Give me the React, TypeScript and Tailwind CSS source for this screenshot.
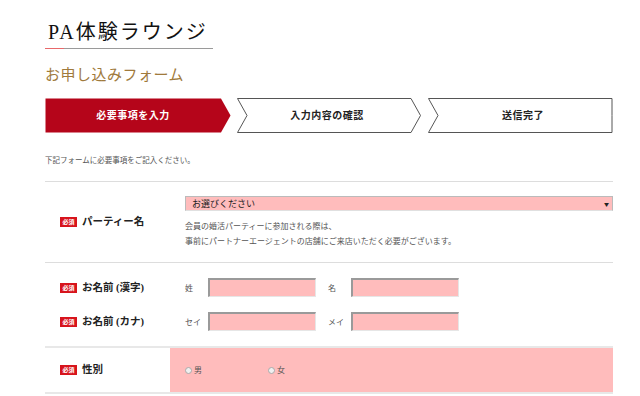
import React from "react";

const serif = { fontFamily: '"Liberation Serif","Noto Sans CJK JP",serif' };
const sans = { fontFamily: '"Noto Sans CJK JP","Liberation Sans",sans-serif' };

function Badge() {
  return (
    <span
      className="inline-flex h-[10px] w-[17px] items-center justify-center bg-[#d7141c] text-[6px] font-bold leading-none text-white"
      style={serif}
    >
      必須
    </span>
  );
}

function Label({ text }: { text: string }) {
  return (
    <div className="flex w-[125px] shrink-0 items-center gap-[5px] pl-[15px]">
      <Badge />
      <span className="text-[10.5px] font-bold text-[#222]" style={serif}>
        {text}
      </span>
    </div>
  );
}

function Step({
  text,
  width,
  active,
  notch,
  point,
}: {
  text: string;
  width: number;
  active?: boolean;
  notch?: boolean;
  point?: boolean;
}) {
  const h = 35;
  const body = point ? width - 10 : width - 1;
  const pts = [
    `0.5,0.5`,
    `${body},0.5`,
    point ? `${width - 0.5},${h / 2}` : `${body},${h / 2}`,
    `${body},${h - 0.5}`,
    `0.5,${h - 0.5}`,
    notch ? `10,${h / 2}` : `0.5,${h / 2}`,
  ].join(" ");
  return (
    <div className="relative h-[35px] shrink-0" style={{ width }}>
      <svg className="absolute inset-0" width={width} height={h}>
        {active ? (
          <polygon points={pts} fill="#b5051a" />
        ) : (
          <polygon points={pts} fill="#fff" stroke="#555" strokeWidth="1" />
        )}
      </svg>
      <div
        className={`relative flex h-full items-center justify-center text-[10px] font-bold tracking-[0.5px] ${
          active ? "text-white" : "text-[#222]"
        }`}
        style={{ ...serif, width: body, paddingLeft: notch ? 6 : 0 }}
      >
        {text}
      </div>
    </div>
  );
}

function Input() {
  return (
    <div className="h-[19px] w-[108px] border-t-2 border-l-2 border-r border-b border-t-[#9a9a9a] border-l-[#9a9a9a] border-r-[#e6e6e6] border-b-[#e6e6e6] bg-[#ffbcbc]" />
  );
}

function Radio({ text }: { text: string }) {
  return (
    <div className="flex items-center gap-[2px] text-[8px] text-[#555]" style={sans}>
      <span className="inline-block h-[7px] w-[7px] rounded-full border border-[#aaa] bg-[#f0f0f0]" />
      <span>{text}</span>
    </div>
  );
}

export default function App() {
  return (
    <div className="h-[396px] w-[640px] overflow-hidden bg-white">
      <div className="ml-[45px] w-[568px]">
        {/* Title */}
        <div className="w-[168px] pt-[19px]">
          <div
            className="pl-[3px] text-[20px] leading-[26px] tracking-[2px] text-[#111]"
            style={serif}
          >
            PA体験ラウンジ
          </div>
          <div className="mt-[3px] flex">
            <div className="h-px w-[19px] bg-[#e8686a]" />
            <div className="h-px flex-1 bg-[#9a9a9a]" />
          </div>
        </div>

        {/* Subtitle */}
        <div
          className="mt-[16px] text-[15px] leading-[20px] tracking-[0.5px] text-[#a07a3c]"
          style={serif}
        >
          お申し込みフォーム
        </div>

        {/* Steps */}
        <div className="mt-[13px] flex">
          <Step text="必要事項を入力" width={186} active point />
          <div className="w-[6px]" />
          <Step text="入力内容の確認" width={184} notch point />
          <div className="w-[7px]" />
          <Step text="送信完了" width={185} notch />
        </div>

        {/* Instructions */}
        <div className="mt-[22px] text-[7.5px] leading-[10px] text-[#555]" style={sans}>
          下記フォームに必要事項をご記入ください。
        </div>

        <div className="mt-[16px] border-t border-[#ddd]" />

        {/* Row 1 */}
        <div className="flex items-center border-b border-[#ddd] pt-[14px] pb-[14px]">
          <Label text="パーティー名" />
          <div className="flex-1 pl-[15px]">
            <div
              className="flex h-[15px] items-center justify-between border border-[#bbb] border-b-[#e0e0e0] bg-[#ffbcbc] pl-[6px] pr-[3px] text-[9px] text-[#222]"
              style={sans}
            >
              <span>お選びください</span>
              <span className="text-[5px]">▼</span>
            </div>
            <div className="mt-[7px] text-[8px] leading-[15px] text-[#555]" style={sans}>
              <div>会員の婚活パーティーに参加される際は、</div>
              <div>事前にパートナーエージェントの店舗にご来店いただく必要がございます。</div>
            </div>
          </div>
        </div>

        {/* Row 2 */}
        <div className="border-b-2 border-[#e8e8e8] pt-[15px] pb-[15px]">
          <div className="flex items-center">
            <Label text="お名前 (漢字)" />
            <div className="flex items-center pl-[15px]">
              <span className="w-[23px] text-[8px] text-[#555]" style={sans}>姓</span>
              <Input />
              <span className="ml-[12px] w-[23px] text-[8px] text-[#555]" style={sans}>名</span>
              <Input />
            </div>
          </div>
          <div className="mt-[15px] flex items-center">
            <Label text="お名前 (カナ)" />
            <div className="flex items-center pl-[15px]">
              <span className="w-[23px] text-[8px] text-[#555]" style={sans}>セイ</span>
              <Input />
              <span className="ml-[12px] w-[23px] text-[8px] text-[#555]" style={sans}>メイ</span>
              <Input />
            </div>
          </div>
        </div>

        {/* Row 3 */}
        <div className="flex h-[46px] items-stretch border-b-2 border-[#e8e8e8]">
          <Label text="性別" />
          <div className="flex flex-1 items-center bg-[#ffbcbc] pl-[15px]">
            <div className="w-[83px]">
              <Radio text="男" />
            </div>
            <Radio text="女" />
          </div>
        </div>
      </div>
    </div>
  );
}
